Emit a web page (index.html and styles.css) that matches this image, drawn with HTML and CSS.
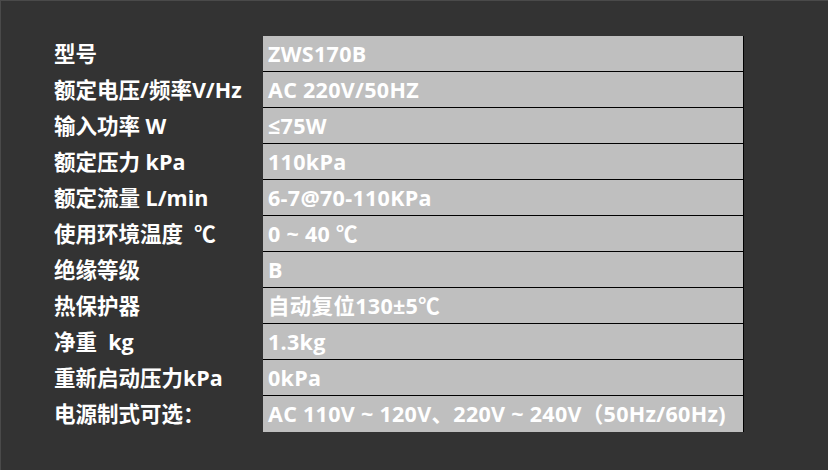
FILE: index.html
```html
<!DOCTYPE html>
<html lang="zh-CN">
<head>
    <meta charset="UTF-8">
    <title>产品参数</title>
    <link rel="stylesheet" href="styles.css">
</head>
<body>
    <div class="panel">
        <div class="spec-table">
            <div class="label">型号</div>
            <div class="value">ZWS170B</div>
            <div class="label">额定电压/频率V/Hz</div>
            <div class="value">AC 220V/50HZ</div>
            <div class="label">输入功率 W</div>
            <div class="value">≤75W</div>
            <div class="label">额定压力 kPa</div>
            <div class="value">110kPa</div>
            <div class="label">额定流量 L/min</div>
            <div class="value">6-7@70-110KPa</div>
            <div class="label">使用环境温度&nbsp; ℃</div>
            <div class="value">0 ~ 40 ℃</div>
            <div class="label">绝缘等级</div>
            <div class="value">B</div>
            <div class="label">热保护器</div>
            <div class="value">自动复位130±5℃</div>
            <div class="label">净重&nbsp; kg</div>
            <div class="value">1.3kg</div>
            <div class="label">重新启动压力kPa</div>
            <div class="value">0kPa</div>
            <div class="label">电源制式可选：</div>
            <div class="value last">AC 110V ~ 120V、220V ~ 240V（50Hz/60Hz)</div>
        </div>
    </div>
</body>
</html>
```

FILE: styles.css
```css
body {
    margin: 0;
    background-color: #333333;
    font-family: 'Open Sans', 'Noto Sans CJK SC', sans-serif;
    font-weight: bold;
    color: #ffffff;
}
.panel {
    width: 828px;
    height: 470px;
    box-sizing: border-box;
    border-top: 1px solid #4a4a4a;
    border-left: 1px solid #4a4a4a;
    padding: 35px 0 0 53px;
}
.spec-table {
    display: grid;
    grid-template-columns: 209px 481px;
    grid-auto-rows: 36px;
}
.label {
    font-size: 21.5px;
    line-height: 36px;
    white-space: nowrap;
}
.value {
    font-size: 21.5px;
    line-height: 35px;
    letter-spacing: 0.3px;
    padding-left: 5px;
    background-color: #bfbfbf;
    border-bottom: 1px solid #000000;
    border-right: 1px solid #000000;
    white-space: nowrap;
}
.value.last {
    border-bottom: none;
    line-height: 36px;
}
```
